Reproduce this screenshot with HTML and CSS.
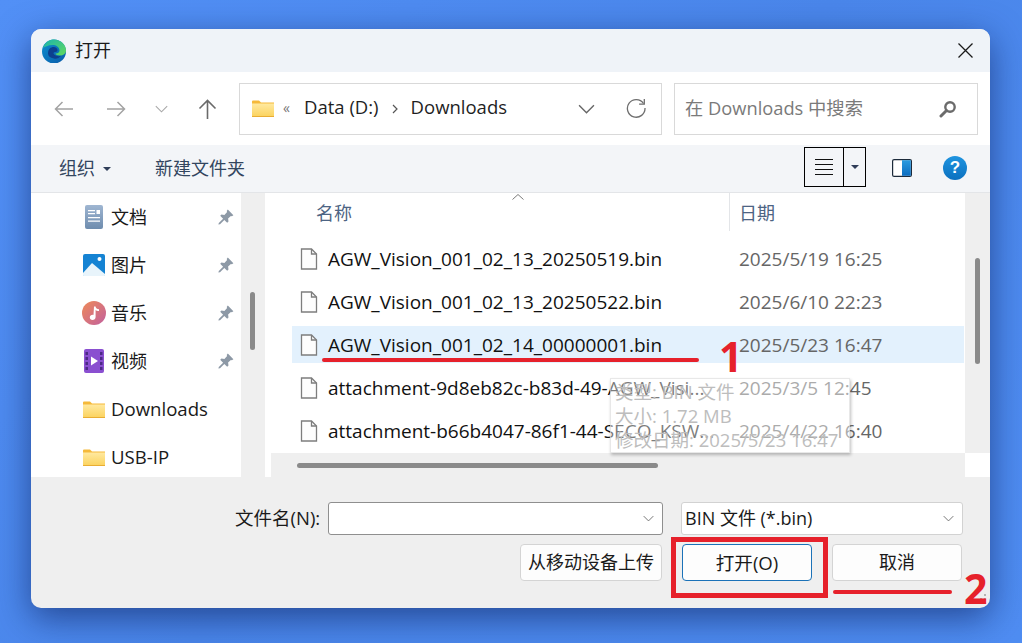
FILE: index.html
```html
<!DOCTYPE html>
<html lang="zh-CN">
<head>
  <meta charset="UTF-8">
  <meta name="viewport" content="width=device-width, initial-scale=1.0">
  <title>打开</title>
  <link rel="stylesheet" href="styles.css">
</head>
<body>
  <svg class="defs" width="0" height="0">
    <defs>
      <linearGradient id="folderFill" x1="0" y1="0" x2="0" y2="1">
        <stop offset="0" stop-color="#ffe9a0"/>
        <stop offset="1" stop-color="#fbd25c"/>
      </linearGradient>
      <linearGradient id="edgeBlue" x1="0" y1="0" x2="1" y2="1">
        <stop offset="0" stop-color="#0c8fd0"/>
        <stop offset="1" stop-color="#0a5aa8"/>
      </linearGradient>
      <linearGradient id="edgeGreen" x1="0" y1="0" x2="1" y2="1">
        <stop offset="0" stop-color="#1bb5b0"/>
        <stop offset="1" stop-color="#62d95a"/>
      </linearGradient>
      <linearGradient id="docFill" x1="0" y1="0" x2="0" y2="1">
        <stop offset="0" stop-color="#9fb6d2"/>
        <stop offset="1" stop-color="#6e8cae"/>
      </linearGradient>
      <linearGradient id="musicFill" x1="0" y1="0" x2="1" y2="1">
        <stop offset="0" stop-color="#ee8a58"/>
        <stop offset="1" stop-color="#c2609e"/>
      </linearGradient>
      <linearGradient id="paneFill" x1="0" y1="0" x2="0" y2="1">
        <stop offset="0" stop-color="#2a9be0"/>
        <stop offset="1" stop-color="#0b6cc0"/>
      </linearGradient>
      <symbol id="folder" viewBox="0 0 22 17">
        <path d="M0 1.500a1 1 0 0 1 1-1h6l2 2h13v14H0z" fill="#f5b93a"/>
        <path d="M0 3.500h22v13.500H0z" fill="url(#folderFill)"/>
        <path d="M0 16h22v1H0z" fill="#e9ad33"/>
      </symbol>
      <symbol id="file" viewBox="0 0 18 22">
        <path d="M1.500 1h10l5 5v15h-15z" fill="#fdfdfd" stroke="#7d7d7d" stroke-width="1.300"/>
        <path d="M11.500 1v5h5" fill="none" stroke="#7d7d7d" stroke-width="1.300"/>
      </symbol>
      <symbol id="pin" viewBox="0 0 16 16">
        <path d="M9.800.6l5.600 5.600-1.500 1.100-1-.4-2.800 2.700.4 2.900-1.300 1.300-2.900-2.900-4.300 4.300-1.600.4.400-1.600 4.300-4.300-2.900-2.900L3.500 5.500l2.900.4 2.700-2.800-.4-1z" fill="#8d99a6"/>
      </symbol>
      <symbol id="chev" viewBox="0 0 16 9">
        <path d="M1 1l7 7 7-7" fill="none" stroke="currentColor" stroke-width="1.300"/>
      </symbol>
    </defs>
  </svg>

  <div class="dialog">
    <div class="titlebar">
      <svg class="edge" viewBox="0 0 24 24">
        <circle cx="12" cy="12.500" r="12" fill="url(#edgeBlue)"/>
        <path d="M1 9C3 3 7.500.5 12 .5c6.500 0 12 5 12 11 0 3.500-3 5-6 5-2.500 0-4.500-.8-4.500-2 3 0 4-1.500 4-3C17.500 8 14 6 10.500 6 6 6 2.500 8 1 9z" fill="url(#edgeGreen)"/>
        <path d="M6 14.500C6 10 9 8 11.500 8c2.500 0 4 1.500 4 3 0 1-.8 2-2.300 2-2 0-2.200 1.500-.8 2.800 1.500 1.300 4 1.700 6.600 1-2 2.700-5 3.200-7 2.700C8 18.800 6 17 6 14.500z" fill="#0d3f8f"/>
      </svg>
      <span class="title-text">打开</span>
      <svg class="close" viewBox="0 0 15 15"><path d="M.5.500l14 14M14.500.500l-14 14" stroke="#1a1a1a" stroke-width="1.300"/></svg>
    </div>

    <div class="navbar">
      <svg class="nav-arrow back" viewBox="0 0 19 16"><path d="M8.500 1L1.500 8l7 7M1.500 8H19" fill="none" stroke="#a3a3a3" stroke-width="1.500"/></svg>
      <svg class="nav-arrow forward" viewBox="0 0 19 16"><path d="M10.500 1l7 7-7 7M17.500 8H0" fill="none" stroke="#a3a3a3" stroke-width="1.500"/></svg>
      <svg class="nav-chev"><use href="#chev"/></svg>
      <svg class="nav-arrow up" viewBox="0 0 19 20"><path d="M1.500 9.500l8-8 8 8M9.500 1.500V20" fill="none" stroke="#6a6a6a" stroke-width="1.600"/></svg>
      <div class="address">
        <svg class="addr-folder"><use href="#folder"/></svg>
        <span class="addr-quote">«</span>
        <span class="addr-part">Data (D:)</span>
        <svg class="addr-sep" viewBox="0 0 6 10"><path d="M1 1l4 4-4 4" fill="none" stroke="#555" stroke-width="1.200"/></svg>
        <span class="addr-part">Downloads</span>
        <svg class="addr-chev"><use href="#chev"/></svg>
        <svg class="addr-refresh" viewBox="0 0 20 20"><path d="M17.500 5.500A8.800 8.800 0 1 0 19 10" fill="none" stroke="#6e6e6e" stroke-width="1.300"/><path d="M18.300 1v5.200h-5.200" fill="none" stroke="#6e6e6e" stroke-width="1.300"/></svg>
      </div>
      <div class="search">
        <span class="search-text">在 Downloads 中搜索</span>
        <svg class="search-icon" viewBox="0 0 18 18"><circle cx="11" cy="7" r="4.700" fill="none" stroke="#6b6b6b" stroke-width="2.400"/><path d="M7.500 10.500L2 16" stroke="#6b6b6b" stroke-width="3" stroke-linecap="round"/></svg>
      </div>
    </div>

    <div class="toolbar">
      <span class="tool-item">组织</span>
      <span class="caret"></span>
      <span class="tool-item new-folder">新建文件夹</span>
      <div class="view-btn">
        <span class="view-main"><i></i><i></i><i></i><i></i></span>
        <span class="view-drop"><span class="caret"></span></span>
      </div>
      <svg class="pane-icon" viewBox="0 0 20 18"><rect x=".6" y=".6" width="18.800" height="16.800" rx="1.500" fill="#fff" stroke="#1c2a3a" stroke-width="1.200"/><rect x="10" y="1.200" width="8.800" height="15.600" fill="url(#paneFill)"/></svg>
      <span class="help">?</span>
    </div>

    <div class="content">
      <div class="sidebar">
        <div class="side-row">
          <svg class="side-icon" viewBox="0 0 24 24"><rect x="3" y="0" width="18" height="24" rx="2" fill="url(#docFill)"/><path d="M6 8h7v1.300H6zM6 12h12v1.300H6zM6 15.500h12v1.300H6zM6 5h7v1.300H6z" fill="#fff"/><rect x="14.500" y="5" width="3.500" height="4" fill="#fff"/></svg>
          <span class="side-label">文档</span>
          <svg class="pin"><use href="#pin"/></svg>
        </div>
        <div class="side-row">
          <svg class="side-icon" viewBox="0 0 24 24"><rect x="1" y="1" width="22" height="22" rx="2" fill="#1583d3"/><circle cx="17.500" cy="6" r="2" fill="#fff"/><path d="M1 20l9-10 13 11v1a1 1 0 0 1-1 1H2a1 1 0 0 1-1-1z" fill="#e8f4fb"/></svg>
          <span class="side-label">图片</span>
          <svg class="pin"><use href="#pin"/></svg>
        </div>
        <div class="side-row">
          <svg class="side-icon" viewBox="0 0 24 24"><circle cx="12" cy="12" r="12" fill="url(#musicFill)"/><path d="M12 5.500h1.600c.2 1.800 1.500 2.500 3.400 2.700v1.800c-1.500 0-2.800-.4-3.400-1.100v7c0 1.800-1.400 3-3.100 3-1.500 0-2.700-1-2.700-2.500s1.300-2.600 3-2.600c.3 0 .5 0 .7.100z" fill="#fff"/></svg>
          <span class="side-label">音乐</span>
          <svg class="pin"><use href="#pin"/></svg>
        </div>
        <div class="side-row">
          <svg class="side-icon" viewBox="0 0 24 24"><rect x="2" y="0" width="20" height="24" rx="2" fill="#8a4fd0"/><path d="M3.500 3h2.500v3H3.500zM3.500 8h2.500v3H3.500zM3.500 13h2.500v3H3.500zM3.500 18h2.500v3H3.500zM18 3h2.500v3H18zM18 8h2.500v3H18zM18 13h2.500v3H18zM18 18h2.500v3H18z" fill="#4c2a86"/><path d="M9 7.500l7 4.500-7 4.500z" fill="#fff"/></svg>
          <span class="side-label">视频</span>
          <svg class="pin"><use href="#pin"/></svg>
        </div>
        <div class="side-row">
          <svg class="side-icon folder-icon"><use href="#folder"/></svg>
          <span class="side-label latin">Downloads</span>
        </div>
        <div class="side-row">
          <svg class="side-icon folder-icon"><use href="#folder"/></svg>
          <span class="side-label latin">USB-IP</span>
        </div>
      </div>
      <div class="side-scroll"><span class="side-thumb"></span></div>

      <div class="files">
        <div class="file-head">
          <span class="col-name">名称</span>
          <svg class="sort-caret" viewBox="0 0 12 6"><path d="M.5 5.500L6 .5l5.500 5" fill="none" stroke="#7b7b7b"/></svg>
          <span class="col-date">日期</span>
        </div>
        <div class="file-row">
          <svg class="file-icon"><use href="#file"/></svg>
          <span class="file-name">AGW_Vision_001_02_13_20250519.bin</span>
          <span class="file-date">2025/5/19 16:25</span>
        </div>
        <div class="file-row">
          <svg class="file-icon"><use href="#file"/></svg>
          <span class="file-name">AGW_Vision_001_02_13_20250522.bin</span>
          <span class="file-date">2025/6/10 22:23</span>
        </div>
        <div class="file-row selected">
          <svg class="file-icon"><use href="#file"/></svg>
          <span class="file-name">AGW_Vision_001_02_14_00000001.bin</span>
          <span class="file-date">2025/5/23 16:47</span>
        </div>
        <div class="file-row">
          <svg class="file-icon"><use href="#file"/></svg>
          <span class="file-name">attachment-9d8eb82c-b83d-49-AGW_Visi...</span>
          <span class="file-date">2025/3/5 12:45</span>
        </div>
        <div class="file-row">
          <svg class="file-icon"><use href="#file"/></svg>
          <span class="file-name">attachment-b66b4047-86f1-44-SECO_KSW...</span>
          <span class="file-date">2025/4/22 16:40</span>
        </div>
        <div class="h-scroll"><span class="h-thumb"></span></div>
      </div>

      <div class="v-col">
        <div class="v-scroll"><span class="v-thumb"></span></div>
      </div>
    </div>

    <div class="footer">
      <div class="footer-row">
        <span class="name-label">文件名(N):</span>
        <div class="combo name-combo"><svg class="combo-chev"><use href="#chev"/></svg></div>
        <div class="combo type-combo"><span class="type-text">BIN 文件 (*.bin)</span><svg class="combo-chev"><use href="#chev"/></svg></div>
      </div>
      <div class="footer-row buttons">
        <button class="btn upload">从移动设备上传</button>
        <button class="btn open">打开(O)</button>
        <button class="btn cancel">取消</button>
      </div>
    </div>

    <div class="tooltip">
      <div>类型: BIN 文件</div>
      <div>大小: 1.72 MB</div>
      <div>修改日期: 2025/5/23 16:47</div>
    </div>

    <svg class="grip" viewBox="0 0 12 12"><path d="M9 1h2v2H9zM5 5h2v2H5zM9 5h2v2H9zM1 9h2v2H1zM5 9h2v2H5zM9 9h2v2H9z" fill="#b5b5b5"/></svg>

    <span class="mark line-one"></span>
    <span class="mark-num num-one">1</span>
    <span class="mark box-two"></span>
    <span class="mark line-two"></span>
    <span class="mark-num num-two">2</span>
  </div>
</body>
</html>
```

FILE: styles.css
```css
* {
  box-sizing: border-box;
}
html, body {
  margin: 0;
  height: 100%;
}
body {
  width: 1022px;
  height: 643px;
  overflow: hidden;
  padding: 29px 32px 35px 31px;
  background: linear-gradient(135deg, #5290f6 0%, #4a86ea 50%, #4f8df2 100%);
  font-family: "Open Sans", "Noto Sans CJK SC", sans-serif;
  font-size: 18px;
  color: #1a1a1a;
}
.defs {
  position: absolute;
}
.dialog {
  position: relative;
  width: 959px;
  height: 579px;
  border-radius: 10px;
  background: #efefef;
  box-shadow: 0 10px 34px rgba(10, 30, 90, 0.6);
}
.latin {
  font-size: 18.6px;
}

/* title */
.titlebar {
  display: flex;
  align-items: center;
  height: 43px;
  padding: 0 17px 0 11px;
  background: #eff3f8;
  border-radius: 10px 10px 0 0;
}
.edge {
  width: 24px;
  height: 24px;
  margin-right: 9px;
}
.title-text {
  flex: 1;
  padding-bottom: 4px;
}
.close {
  width: 15px;
  height: 15px;
}

/* nav */
.navbar {
  display: flex;
  align-items: center;
  height: 73px;
  background: #fff;
}
.nav-arrow {
  flex: none;
  width: 19px;
  height: 16px;
}
.back {
  margin-left: 23px;
}
.forward {
  margin-left: 34px;
}
.nav-chev {
  flex: none;
  width: 13px;
  height: 8px;
  margin-left: 29px;
  color: #a8a8a8;
}
.up {
  height: 20px;
  margin-left: 30px;
}
.address {
  display: flex;
  align-items: center;
  width: 423px;
  height: 52px;
  margin-left: 22px;
  padding-left: 12px;
  border: 1px solid #d9d9d9;
  color: #1f1f1f;
}
.addr-folder {
  width: 22px;
  height: 17px;
}
.addr-quote {
  margin-left: 9px;
  width: 21px;
  font-size: 14px;
  color: #777;
  padding-bottom: 3px;
}
.addr-part {
  font-size: 18.5px;
  padding-bottom: 4px;
}
.addr-sep {
  width: 6px;
  height: 10px;
  margin: 0 13px 0 13px;
}
.addr-chev {
  width: 17px;
  height: 10px;
  margin-left: 71px;
  color: #666;
}
.addr-refresh {
  width: 20px;
  height: 20px;
  margin-left: 31px;
  margin-bottom: 2px;
}
.search {
  display: flex;
  align-items: center;
  justify-content: space-between;
  width: 304px;
  height: 52px;
  margin-left: 12px;
  padding: 0 20px 0 10px;
  border: 1px solid #d9d9d9;
  color: #7a7a7a;
}
.search-text {
  font-size: 18.3px;
  padding-bottom: 3px;
}
.search-icon {
  width: 18px;
  height: 18px;
}

/* toolbar */
.toolbar {
  display: flex;
  align-items: center;
  height: 48px;
  padding-left: 28px;
  background: #f3f5f8;
  border-bottom: 1px solid #e3e5e8;
  color: #33465f;
}
.tool-item {
  padding-bottom: 3px;
}
.caret {
  display: inline-block;
  width: 0;
  height: 0;
  border: 4px solid transparent;
  border-top: 4px solid #2f3d58;
  border-bottom: 0;
  margin-left: 8px;
}
.new-folder {
  margin-left: 44px;
  margin-right: 559px;
}
.view-btn {
  display: flex;
  width: 62px;
  height: 40px;
  margin-bottom: 3px;
  border: 1px solid #000;
}
.view-main {
  display: flex;
  flex-direction: column;
  justify-content: center;
  gap: 4px;
  width: 39px;
  padding: 0 10px;
  border-right: 1px solid #000;
}
.view-main i {
  display: block;
  height: 1px;
  background: #111;
}
.view-drop {
  display: flex;
  align-items: center;
  justify-content: center;
  flex: 1;
}
.view-drop .caret {
  margin-left: 0;
}
.pane-icon {
  width: 20px;
  height: 18px;
  margin-left: 26px;
  margin-bottom: 2px;
}
.help {
  width: 24px;
  height: 24px;
  margin-left: 31px;
  margin-bottom: 2px;
  border-radius: 50%;
  background: linear-gradient(#1f94e0, #0b70bf);
  color: #fff;
  font: bold 17px/24px "Liberation Sans", sans-serif;
  text-align: center;
}

/* main area */
.content {
  display: flex;
  height: 284px;
  background: #fff;
}
.sidebar {
  flex: none;
  width: 210px;
  overflow: hidden;
}
.side-row {
  display: flex;
  align-items: center;
  height: 48px;
  padding: 0 7px 0 51px;
}
.side-icon {
  flex: none;
  width: 24px;
  height: 24px;
  margin-right: 5px;
}
.folder-icon {
  height: 17px;
}
.side-label {
  flex: 1;
  padding-bottom: 2px;
}
.pin {
  width: 16px;
  height: 16px;
}
.side-scroll {
  flex: none;
  width: 24px;
  margin-right: 3px;
  padding: 99px 0 0 9px;
  background: #efefef;
}
.side-thumb {
  display: block;
  width: 5px;
  height: 58px;
  border-radius: 3px;
  background: #8a8a8a;
}
.files {
  flex: none;
  width: 697px;
}
.file-head {
  position: relative;
  display: flex;
  height: 47px;
  padding-left: 48px;
  color: #4d6483;
}
.col-name {
  width: 414px;
  height: 38px;
  line-height: 40px;
  border-right: 1px solid #e3e5e8;
}
.col-date {
  margin-left: 9px;
  line-height: 40px;
}
.sort-caret {
  position: absolute;
  left: 244px;
  top: 1px;
  width: 12px;
  height: 6px;
}
.file-row {
  display: flex;
  align-items: center;
  height: 37px;
  margin: 0 1px 6px 24px;
  font-size: 19px;
}
.file-row.selected {
  background: #e3f1fd;
}
.file-icon {
  flex: none;
  width: 18px;
  height: 22px;
  margin: 0 10px 0 8px;
}
.file-name {
  flex: none;
  width: 411px;
  white-space: nowrap;
  color: #111;
}
.file-date {
  color: #666;
}
.h-scroll {
  height: 24px;
  margin: -2px 0 0 3px;
  padding: 10px 0 0 26px;
  background: #efefef;
}
.h-thumb {
  display: block;
  width: 361px;
  height: 5px;
  border-radius: 3px;
  background: #8a8a8a;
}
.v-col {
  flex: 1;
}
.v-scroll {
  height: 260px;
  padding: 65px 0 0 10px;
  background: #efefef;
}
.v-thumb {
  display: block;
  width: 5px;
  height: 106px;
  border-radius: 3px;
  background: #8a8a8a;
}

/* bottom */
.footer {
  padding-top: 25px;
}
.footer-row {
  display: flex;
  align-items: center;
}
.name-label {
  margin-left: 204px;
  width: 93px;
  font-size: 18.5px;
  padding-bottom: 4px;
}
.combo {
  display: flex;
  align-items: center;
  justify-content: flex-end;
  height: 33px;
  background: #fff;
  border: 1px solid #8f8f8f;
  border-radius: 3px;
  padding-right: 8px;
}
.name-combo {
  width: 335px;
}
.type-combo {
  justify-content: space-between;
  width: 282px;
  margin-left: 18px;
  padding-left: 3px;
  border-color: #d2d2d2;
}
.type-text {
  padding-bottom: 4px;
}
.combo-chev {
  width: 11px;
  height: 7px;
  color: #666;
}
.buttons {
  margin-top: 9px;
  padding-left: 489px;
}
.btn {
  height: 37px;
  width: 130px;
  background: #fdfdfd;
  border: 1px solid #d4d4d4;
  border-radius: 4px;
  font: inherit;
  color: #1a1a1a;
  padding: 0 0 3px;
}
.upload {
  width: 142px;
  margin-right: 20px;
}
.open {
  border-color: #1b72b8;
  margin-right: 20px;
  font-size: 18.6px;
}

/* hover tip over the list */
.tooltip {
  position: absolute;
  left: 579px;
  top: 349px;
  width: 240px;
  height: 75px;
  padding: 1px 0 0 4px;
  background: rgba(255, 255, 255, 0.45);
  border: 1px solid rgba(210, 210, 210, 0.5);
  box-shadow: 1px 2px 3px rgba(0, 0, 0, 0.25);
  color: #bdbdbd;
  font-size: 18.5px;
  line-height: 24px;
}
.grip {
  position: absolute;
  right: 3px;
  bottom: 3px;
  width: 12px;
  height: 12px;
}

/* red annotations */
.mark {
  position: absolute;
  background: #e6212b;
}
.line-one {
  left: 291px;
  top: 329px;
  width: 377px;
  height: 4px;
  border-radius: 2px;
}
.box-two {
  left: 640px;
  top: 508px;
  width: 157px;
  height: 61px;
  background: transparent;
  border: 5px solid #e6212b;
}
.line-two {
  left: 802px;
  top: 561px;
  width: 119px;
  height: 4px;
  border-radius: 2px;
}
.mark-num {
  position: absolute;
  color: #e6212b;
  font: 700 41px/30px "Open Sans", sans-serif;
}
.num-one {
  left: 688px;
  top: 312px;
}
.num-two {
  left: 933px;
  top: 544px;
}
```
